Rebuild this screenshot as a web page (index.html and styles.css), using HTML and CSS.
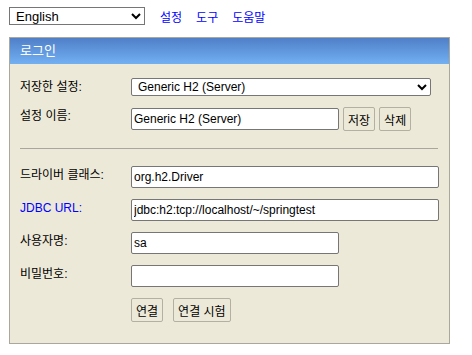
FILE: index.html
```html
<!DOCTYPE html>
<html lang="ko">
<head>
    <meta charset="UTF-8">
    <meta name="viewport" content="width=device-width, initial-scale=1.0">
    <title>H2 Console</title>
    <link rel="stylesheet" href="styles.css">
</head>
<body>
    <!-- Top toolbar: language + links -->
    <div class="toolbar">
        <select class="lang-select">
            <option>English</option>
        </select>
        <a href="#" class="top-link">설정</a>
        <a href="#" class="top-link">도구</a>
        <a href="#" class="top-link">도움말</a>
    </div>

    <!-- Login panel -->
    <div class="login">
        <div class="login-title">로그인</div>
        <div class="login-body">
            <div class="form">
                <label class="lbl">저장한 설정:</label>
                <select class="saved-select">
                    <option>Generic H2 (Server)</option>
                </select>

                <label class="lbl">설정 이름:</label>
                <div class="field-row">
                    <input class="txt txt-short" type="text" value="Generic H2 (Server)">
                    <button class="btn">저장</button>
                    <button class="btn">삭제</button>
                </div>

                <hr class="sep">

                <label class="lbl">드라이버 클래스:</label>
                <input class="txt txt-long" type="text" value="org.h2.Driver">

                <label class="lbl lbl-link">JDBC URL:</label>
                <input class="txt txt-long" type="text" value="jdbc:h2:tcp://localhost/~/springtest">

                <label class="lbl">사용자명:</label>
                <input class="txt txt-short" type="text" value="sa">

                <label class="lbl">비밀번호:</label>
                <input class="txt txt-short" type="password" value="">

                <span></span>
                <div class="field-row actions">
                    <button class="btn">연결</button>
                    <button class="btn">연결 시험</button>
                </div>
            </div>
        </div>
    </div>
</body>
</html>
```

FILE: styles.css
```css
body {
    margin: 0;
    font-family: "Liberation Sans", Arial, "Noto Sans CJK KR", sans-serif;
    font-size: 12px;
    color: #000;
    background: #fff;
}
.toolbar {
    display: flex;
    align-items: center;
    margin: 7px 0 0 9px;
    height: 18px;
}
.lang-select {
    width: 136px;
    height: 18px;
    margin: 0;
    padding: 0 0 0 2px;
    font-family: inherit;
    font-size: 13px;
    border: 1px solid #767676;
    border-radius: 0;
    background: #fff;
}
.top-link {
    margin-left: 14px;
    color: #0000ff;
    text-decoration: none;
    font-size: 12px;
}
.toolbar .top-link:first-of-type {
    margin-left: 15px;
}
.login {
    margin: 12px 0 0 9px;
    width: 439px;
    border: 1px solid #aaa89c;
}
.login-title {
    height: 26px;
    line-height: 25px;
    padding-left: 10px;
    color: #fff;
    font-size: 13px;
    background: linear-gradient(to bottom, #4f7fc8, #72b0f2);
}
.login-body {
    background: #ece9d8;
    padding: 14px 10px 21px 10px;
}
.form {
    display: grid;
    grid-template-columns: 111px auto;
    row-gap: 11px;
    align-items: start;
    justify-items: start;
}
.lbl {
    padding-top: 2px;
    line-height: 14px;
}
.lbl-link {
    color: #0000ff;
}
.saved-select {
    width: 300px;
    height: 18px;
    margin: 0;
    padding: 0 0 0 2px;
    font-family: inherit;
    font-size: 12px;
    border: 1px solid #767676;
    border-radius: 2px;
    background: #fff;
}
.field-row {
    display: flex;
    align-items: center;
    gap: 4px;
}
.txt {
    box-sizing: border-box;
    height: 22px;
    margin: 0;
    padding: 0 2px;
    font-family: inherit;
    font-size: 12px;
    border: 1px solid #767676;
    border-radius: 2px;
    background: #fff;
}
.txt-long {
    width: 308px;
}
.txt-short {
    width: 208px;
}
.btn {
    box-sizing: border-box;
    height: 24px;
    margin: 0;
    padding: 0 4px;
    font-family: inherit;
    font-size: 12px;
    color: #000;
    background: #ece9d8;
    border: 1px solid #b3afa3;
    border-radius: 2px;
}
.actions {
    gap: 10px;
}
.sep {
    grid-column: 1 / 3;
    justify-self: stretch;
    margin: 6px 1px 6px 0;
    height: 0;
    border: 0;
    border-top: 1px solid #a9a79c;
}
```
